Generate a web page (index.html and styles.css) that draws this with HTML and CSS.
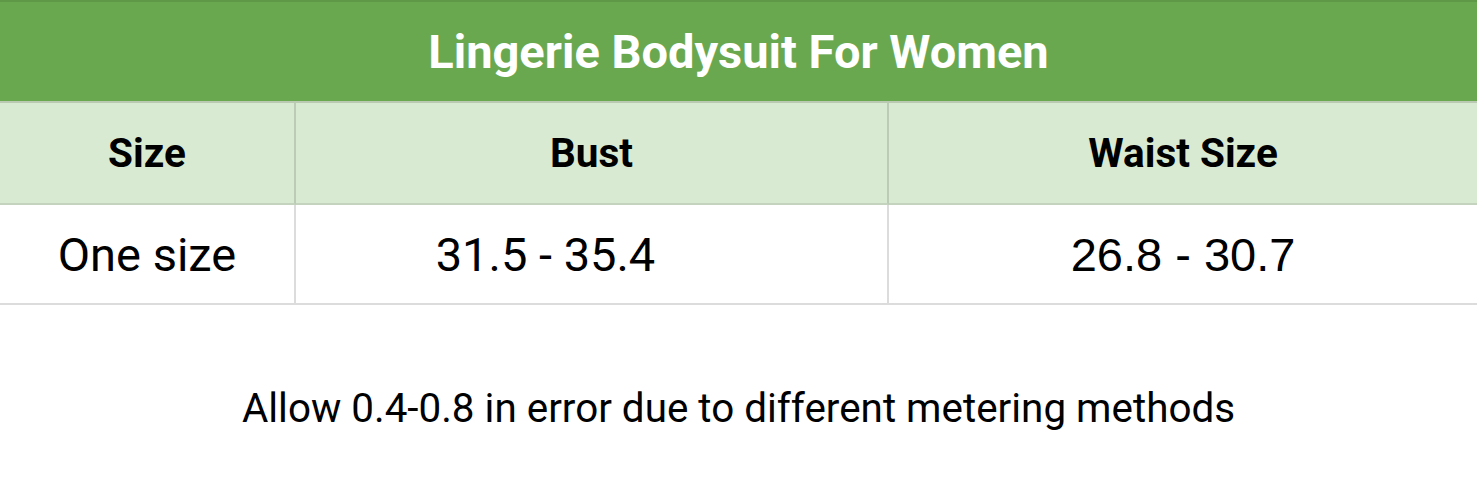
FILE: index.html
```html
<!DOCTYPE html>
<html>
<head>
<meta charset="utf-8">
<link rel="stylesheet" href="styles.css">
</head>
<body>
<div class="chart">
  <div class="title">Lingerie Bodysuit For Women</div>
  <div class="grid">
    <div class="cell head c1">Size</div>
    <div class="cell head c2">Bust</div>
    <div class="cell head c3">Waist Size</div>
    <div class="cell data c1 roboto">One size</div>
    <div class="cell data c2 roboto bust">31.5 - 35.4</div>
    <div class="cell data c3 arial">26.8 - 30.7</div>
  </div>
  <p class="note">Allow 0.4-0.8 in error due to different metering methods</p>
</div>
</body>
</html>
```
FILE: styles.css
```css
* { box-sizing: border-box; }
html, body { margin: 0; padding: 0; background: #ffffff; }
body { font-family: Roboto, "Liberation Sans", sans-serif; color: #000; }
.chart { width: 1477px; }
.title {
  height: 103px;
  background: #6aa84f;
  border-top: 2px solid #5f9847;
  border-bottom: 2px solid #b9c9b2;
  color: #ffffff;
  font-weight: 700;
  font-size: 47px;
  display: flex;
  align-items: center;
  justify-content: center;
  padding-bottom: 1px;
}
.grid {
  display: grid;
  grid-template-columns: 296px 593px 588px;
  grid-template-rows: 102px 100px;
}
.cell {
  display: flex;
  align-items: center;
  justify-content: center;
}
.head {
  background: #d9ead3;
  font-weight: 700;
  font-size: 40.5px;
  border-bottom: 2px solid #c3d3bd;
}
.head.c1, .head.c2 { border-right: 2px solid #bccbb5; }
.data {
  background: #ffffff;
  font-size: 47px;
  border-bottom: 2px solid #dcdcdc;
}
.data.c1, .data.c2 { border-right: 2px solid #dcdcdc; }
.roboto { font-family: Roboto, sans-serif; }
.arial { font-family: "Liberation Sans", Arial, sans-serif; font-size: 47px; }
.bust { padding-right: 92px; }
.note {
  margin: 0;
  padding-top: 80px;
  text-align: center;
  font-size: 40.4px;
  line-height: 48px;
}
```
